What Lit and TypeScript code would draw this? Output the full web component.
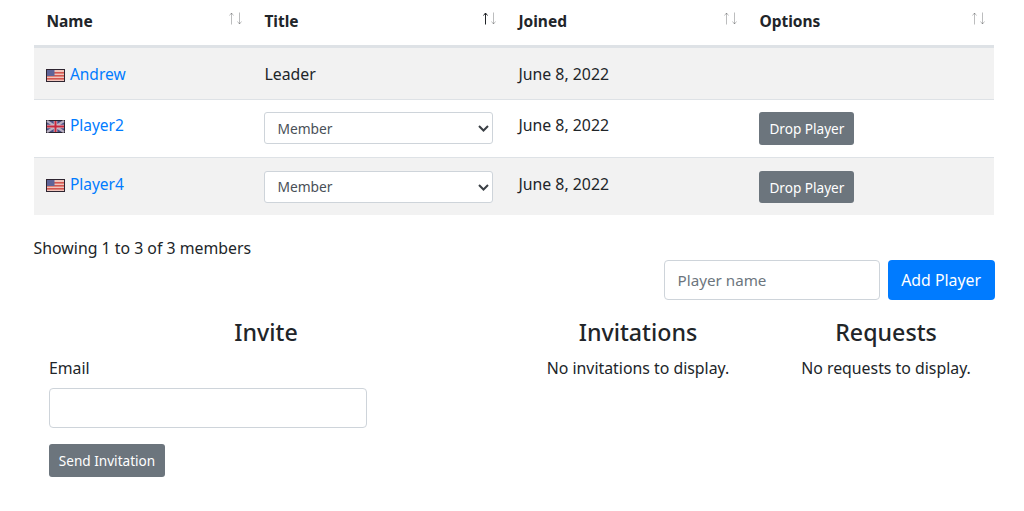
import { LitElement, html, css, svg } from "lit";
import { customElement } from "lit/decorators.js";

const usFlag = svg`<svg class="flag" viewBox="0 0 19 13" width="19" height="13">
  <rect width="19" height="13" fill="#2e2430"/>
  <rect x="1" y="1" width="17" height="11" fill="#f0c4bc"/>
  <rect x="1" y="3" width="17" height="1.6" fill="#d4564f"/>
  <rect x="1" y="6" width="17" height="1.6" fill="#d4564f"/>
  <rect x="1" y="9" width="17" height="1.6" fill="#d4564f"/>
  <rect x="1" y="1" width="7.5" height="6" fill="#5f6498"/>
</svg>`;

const ukFlag = svg`<svg class="flag" viewBox="0 0 19 13" width="19" height="13">
  <rect width="19" height="13" fill="#2a2530"/>
  <rect x="1" y="1" width="17" height="11" fill="#4a4f86"/>
  <path d="M1 1L18 12M18 1L1 12" stroke="#b9afc0" stroke-width="2.2"/>
  <path d="M9.5 1V12M1 6.5H18" stroke="#d8c4cc" stroke-width="3.6"/>
  <path d="M9.5 1V12M1 6.5H18" stroke="#c8283c" stroke-width="2"/>
</svg>`;

const chevron = svg`<svg class="chev" viewBox="0 0 11 7" width="11" height="7"><path d="M1 1L5.5 5.5L10 1" fill="none" stroke="#3a3f45" stroke-width="2"/></svg>`;

const sort = (asc = false) => svg`<svg class="sort" viewBox="0 0 14 13" width="14" height="13" fill="none" stroke-width="1">
  <path d="M2.5 12.5V1M.5 3.5L2.5 1L4.5 3.5" stroke="#212529" stroke-opacity=${asc ? 1 : 0.3}/>
  <path d="M10.5 .5V12M8.5 9.5L10.5 12L12.5 9.5" stroke="#212529" stroke-opacity="0.3"/>
</svg>`;

@customElement("app-root")
export class AppRoot extends LitElement {
  static styles = css`
    :host { display: block; font-family: "Noto Sans", "Open Sans", sans-serif; font-size: 15.85px; line-height: 24px; color: #212529; background: #fff; }
    * { box-sizing: border-box; }
    .wrap { padding: 0 29px 0 33.6px; height: 511px; overflow: hidden; }
    table { width: 960.8px; table-layout: fixed; border-collapse: collapse; }
    th { position: relative; text-align: left; font-weight: 700; font-size: 15.5px; height: 45px; padding: 9px 12.8px 12px; border-bottom: 3px solid #dee2e6; }
    .sort { position: absolute; top: 11.5px; right: 8.5px; }
    td { vertical-align: top; padding: 12px 12.8px; height: 57px; border-bottom: 1px solid #dee2e6; }
    td.tx { padding-top: 13px; }
    tbody tr:first-child td { height: 53px; padding-top: 14px; }
    tbody tr:last-child td { border-bottom: 0; padding-top: 13px; padding-bottom: 12px; }
    tbody tr:last-child td.tx { padding-top: 14px; }
    tr.odd td { background: #f2f2f2; }
    a { color: #007bff; text-decoration: none; font-size: 15.5px; }
    .flag { vertical-align: -2px; margin-right: 4.5px; filter: blur(.35px); }
    .sel { position: relative; display: block; width: 229px; }
    select { display: block; width: 100%; height: 32px; appearance: none; font: inherit; font-size: 13.8px; line-height: 20px; color: #495057; background: #fff; border: 1px solid #ced4da; border-radius: 3px; padding: 1px 24px 0 12px; }
    .chev { position: absolute; right: 4px; top: 13px; }
    .btn { display: inline-block; border: 1px solid transparent; border-radius: 3px; font: inherit; color: #fff; cursor: pointer; }
    .sec { background: #6c757d; font-size: 13.6px; line-height: 21px; padding: 5px 10px; height: 33px; }
    .prim { background: #007bff; height: 40px; width: 107px; border-radius: 4px; padding: 0; }
    .btn.drop { display: block; width: 95px; height: 32.5px; padding: 5px 0; text-align: center; }
    .info { margin-top: 21px; height: 24px; }
    .add { display: flex; justify-content: flex-end; gap: 8px; margin-top: 0; width: 961px; }
    input { display: block; font: inherit; font-size: 15.2px; height: 40px; color: #495057; background: #fff; border: 1px solid #ced4da; border-radius: 4px; padding: 0 13px; }
    input::placeholder { color: #6c757d; opacity: 1; }
    .add input { width: 216px; }
    .cols { display: grid; grid-template-columns: 496px 248px 248px; margin: 18px 0 0 -15.6px; width: 992px; }
    .col { text-align: center; }
    h3 { margin: 0; font-size: 23.2px; line-height: 29px; font-weight: 500; }
    .col p { margin: 9px 0 0; }
    .form { text-align: left; padding: 9px 0 0 31px; }
    label { display: block; }
    .form input { width: 318px; margin-top: 8px; }
    .form .btn { display: block; margin-top: 16px; width: 116px; padding: 5px 0; text-align: center; }
  `;

  render() {
    const row = (cls: string, flag: unknown, name: string) => html`
      <tr class=${cls}>
        <td class="tx">${flag}<a href="#">${name}</a></td>
        <td><span class="sel"><select><option>Member</option></select>${chevron}</span></td>
        <td class="tx">June 8, 2022</td>
        <td><button class="btn sec drop">Drop Player</button></td>
      </tr>`;
    return html`
      <div class="wrap">
        <table>
          <colgroup><col style="width:218px" /><col style="width:254px" /><col style="width:241px" /><col style="width:247.8px" /></colgroup>
          <thead><tr><th>Name${sort()}</th><th>Title${sort(true)}</th><th>Joined${sort()}</th><th>Options${sort()}</th></tr></thead>
          <tbody>
            <tr class="odd"><td>${usFlag}<a href="#">Andrew</a></td><td>Leader</td><td>June 8, 2022</td><td></td></tr>
            ${row("", ukFlag, "Player2")}
            ${row("odd", usFlag, "Player4")}
          </tbody>
        </table>
        <div class="info">Showing 1 to 3 of 3 members</div>
        <div class="add"><input placeholder="Player name" /><button class="btn prim">Add Player</button></div>
        <div class="cols">
          <div class="col">
            <h3>Invite</h3>
            <div class="form">
              <label>Email</label>
              <input type="text" />
              <button class="btn sec">Send Invitation</button>
            </div>
          </div>
          <div class="col"><h3>Invitations</h3><p>No invitations to display.</p></div>
          <div class="col"><h3>Requests</h3><p>No requests to display.</p></div>
        </div>
      </div>`;
  }
}
